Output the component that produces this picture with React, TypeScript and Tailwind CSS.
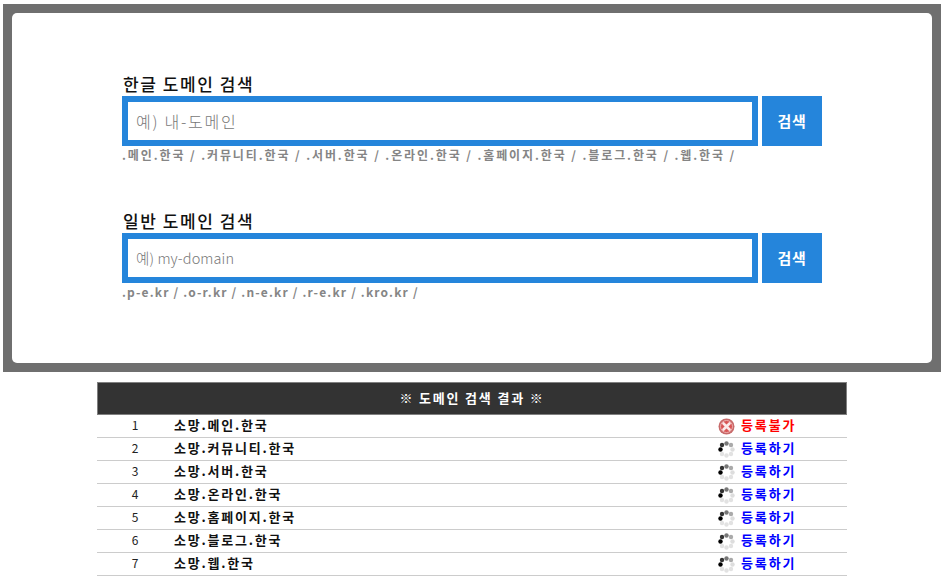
const font = { fontFamily: '"Noto Sans CJK KR", "Liberation Sans", sans-serif' };

function SearchBlock({ title, placeholder, hint, inputClass, hintClass, className }: { title: string; placeholder: string; hint: string; inputClass: string; hintClass: string; className?: string }) {
  return (
    <div className={className}>
      <div className="h-[24px] pl-[1px] text-[17px] leading-[24px] font-medium text-[#111] tracking-[1.55px]">{title}</div>
      <div className="flex gap-1 h-[50px]">
        <div className="w-[636px] border-[6px] border-[#2585db] bg-white flex items-center pl-2">
          <input
            readOnly
            placeholder={placeholder}
            className={`w-full bg-transparent outline-none font-light placeholder:text-[#777777] ${inputClass}`}
          />
        </div>
        <button className="w-[60px] bg-[#2585db] text-white text-[15px] font-bold tracking-[0.8px]">검색</button>
      </div>
      <div className={`h-[18px] text-[12px] leading-[18px] font-bold text-[#858585] whitespace-nowrap ${hintClass}`}>{hint}</div>
    </div>
  );
}

function Fail() {
  return (
    <svg width="17" height="17" viewBox="0 0 17 17" className="block">
      <circle cx="8.5" cy="8.5" r="8" fill="#c76a6a" />
      <circle cx="8.5" cy="8.5" r="6" fill="#d85555" stroke="#eeb0b0" strokeWidth="1" />
      <path d="M5.5 5.5l6 6M11.5 5.5l-6 6" stroke="#fbeaea" strokeWidth="2.6" strokeLinecap="round" />
    </svg>
  );
}

function Spinner() {
  const dots: [number, number, string][] = [
    [2.5, 8.5, "#000000"],
    [4, 4, "#333333"],
    [8.5, 2.5, "#777777"],
    [13, 4, "#aaaaaa"],
    [14.5, 8.5, "#dddddd"],
    [13, 13, "#e2e2e2"],
    [8.5, 14.5, "#e2e2e2"],
    [4, 13, "#e2e2e2"],
  ];
  return (
    <svg width="17" height="17" viewBox="0 0 17 17" className="block">
      {dots.map(([x, y, c], i) => (
        <circle key={i} cx={x} cy={y} r="2.2" fill={c} />
      ))}
    </svg>
  );
}

const rows = ["소망.메인.한국", "소망.커뮤니티.한국", "소망.서버.한국", "소망.온라인.한국", "소망.홈페이지.한국", "소망.블로그.한국", "소망.웹.한국"];

export default function App() {
  return (
    <div className="w-[943px] h-[577px] overflow-hidden bg-white" style={font}>
      <div className="ml-[3px] mt-[4px] w-[938px] h-[368px] bg-[#6f6f6f] p-[9px]">
        <div className="h-[350px] bg-white rounded-[5px] pl-[110px] pt-[59px]">
          <SearchBlock
            title="한글 도메인 검색"
            placeholder="예) 내-도메인"
            hint=".메인.한국 / .커뮤니티.한국 / .서버.한국 / .온라인.한국 / .홈페이지.한국 / .블로그.한국 / .웹.한국 /"
            inputClass="text-[16px] tracking-[1.75px]"
            hintClass="tracking-[1.9px]"
          />
          <SearchBlock
            className="mt-[45px]"
            title="일반 도메인 검색"
            placeholder="예) my-domain"
            inputClass="text-[14.5px] tracking-[0.1px]"
            hintClass="tracking-[1.17px]"
            hint=".p-e.kr / .o-r.kr / .n-e.kr / .r-e.kr / .kro.kr /"
          />
        </div>
      </div>
      <div className="ml-[97px] mt-[10px] w-[750px]">
        <div className="h-[33px] pb-[2px] bg-[#333333] border border-[#808080] flex items-center justify-center text-white text-[13px] font-bold tracking-[1.8px]">
          ※ 도메인 검색 결과 ※
        </div>
        {rows.map((name, i) => (
          <div key={name} className="h-[23px] border-b border-[#cccccc] flex items-center text-[13px]">
            <div className="w-[76px] pb-[2px] text-center text-[12px] text-[#222]">{i + 1}</div>
            <div className="w-[545px] pb-[2px] pl-[1px] font-bold text-[#111] tracking-[1.8px]">{name}</div>
            <div className="mr-[6px]">{i === 0 ? <Fail /> : <Spinner />}</div>
            <div className={`pb-[2px] font-bold tracking-[1.9px] ${i === 0 ? "text-[#ff0000]" : "text-[#0000ff]"}`}>{i === 0 ? "등록불가" : "등록하기"}</div>
          </div>
        ))}
      </div>
    </div>
  );
}
